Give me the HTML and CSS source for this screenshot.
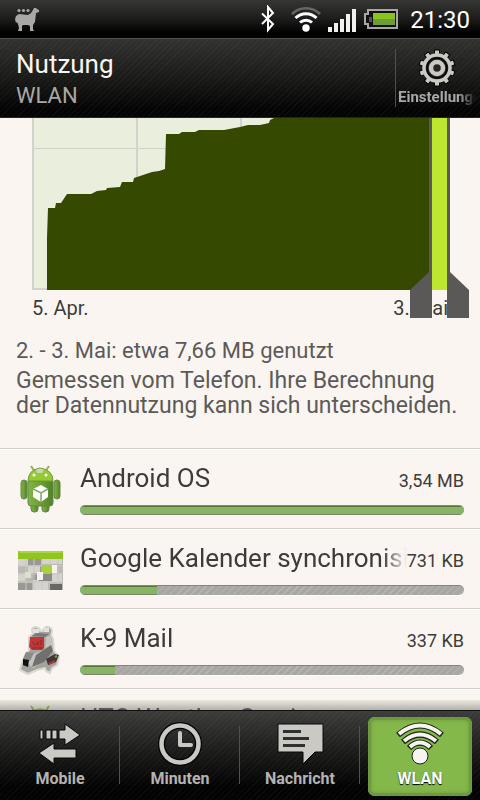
FILE: index.html
```html
<!DOCTYPE html>
<html lang="de">
<head>
<meta charset="utf-8">
<meta name="viewport" content="width=device-width, initial-scale=1">
<title>Nutzung – WLAN</title>
<link rel="stylesheet" href="styles.css">
</head>
<body>
<div class="statusbar">
  <svg class="notification" width="26" height="26" viewBox="0 0 26 26" aria-hidden="true">
    <path fill="#a9a8a6" d="M19 4 20 2h2l1 1 2 1v2l-3 1-1 9-2 3v4l1 2h-4v-5l-2-1H9l-1 1v5H4l1-3-1-4-1-2-1 1-1-4 1-3 3-2 9 1 3-2z"/>
    <g fill="#a9a8a6"><circle cx="5" cy="4.500" r="1.600"/><circle cx="9.500" cy="4.500" r="1.600"/><circle cx="14" cy="4.500" r="1.600"/></g>
  </svg>
  <div class="status-icons">
    <svg class="bluetooth" width="16" height="28" viewBox="0 0 16 28" aria-hidden="true"><path fill="none" stroke="#fff" stroke-width="2" d="M2 8.500 13 19l-5 6V2l5 6L2 19"/></svg>
    <svg width="32" height="28" viewBox="0 0 32 28" fill="none" stroke="#fff" stroke-width="3" aria-hidden="true">
      <path stroke="#686866" stroke-width="2.500" d="M2 9a20 20 0 0 1 28 0"/><path d="M5.500 13a15 15 0 0 1 21 0"/><path d="M10 17.500a9 9 0 0 1 12 0"/><circle cx="16" cy="23" r="3.700" fill="#fff" stroke="none"/>
    </svg>
    <svg width="28" height="26" viewBox="0 -2 28 26" fill="#f2f1ef" aria-hidden="true"><path d="M0 19h4v5H0zM6 15h4v9H6zM12 11h4v13h-4zM18 6h4v18h-4zM24 1h4v23h-4z"/></svg>
    <svg class="battery" width="34" height="20" viewBox="0 0 34 20" aria-hidden="true"><path fill="#111" stroke="#aaa8a6" stroke-width="2" d="M4 1h29v18H4v-4H1V5h3z"/><path fill="#8ac31d" d="M9 4h22v6H9z"/><path fill="#6d9c35" d="M9 10h22v6H9z"/><path fill="#555" d="M5 8h3v5H5z"/></svg>
    <time class="clock">21:30</time>
  </div>
</div>
<header class="titlebar">
  <div class="titles">
    <h1>Nutzung</h1>
    <p>WLAN</p>
  </div>
  <button class="settings" type="button">
    <svg width="38" height="38" viewBox="-19 -19 38 38" aria-hidden="true">
      <g fill="#cbc9c3" stroke="#000" stroke-width="1">
        <path id="tooth" d="M-2.500-18h5v5h-5zM-2.500 13h5v5h-5z"/><use href="#tooth" transform="rotate(36)"/><use href="#tooth" transform="rotate(72)"/><use href="#tooth" transform="rotate(108)"/><use href="#tooth" transform="rotate(144)"/>
      </g>
      <circle r="13" fill="#262625" stroke="#cbc9c3" stroke-width="3.500"/><circle r="10" fill="none" stroke="#080808" stroke-width="1.500"/><circle r="6" fill="#262625" stroke="#cbc9c3" stroke-width="4.500"/>
    </svg>
    <span>Einstellungen</span>
  </button>
</header>
<main>
  <section class="chart">
    <svg class="plot" viewBox="0 0 480 172" preserveAspectRatio="none" role="img" aria-label="Datennutzung">
      <path fill="#eaeedd" d="M32 0h398v172H32z"/>
      <path fill="none" stroke="#d3d3ce" stroke-width="2" d="M33 0v171h397M137 0v171M241 0v171"/>
      <path fill="none" stroke="#d3d3ce" d="M34 30.500h396"/>
      <path fill="#354a00" d="M47 172V120L48 90H55L56 85H61L67 76H91L97 73 106 72 107 70 120 69 122 64H133L134 60 146 56 152 54 159 53 165 51 166 16H179L182 14H195L199 12H224L240 9 248 7H260L269 5 270 2 274 0H430V172z"/>
      <path fill="#bce630" d="M432 0h15v172h-15z"/>
    </svg>
    <div class="axis"><span>5. Apr.</span><span>3. Mai</span></div>
    <svg class="handles" viewBox="0 0 480 200" preserveAspectRatio="none" aria-hidden="true">
      <path fill="#5b5957" d="M429 0h3v200h-22v-28l19-18zM447 0h3v154l19 18v28h-22z"/>
    </svg>
  </section>
  <section class="summary">
    <p>2. - 3. Mai: etwa 7,66 MB genutzt</p>
    <p class="note">Gemessen vom Telefon. Ihre Berechnung der Datennutzung kann sich unterscheiden.</p>
  </section>
  <ul class="apps">
    <li>
      <svg class="app-icon" viewBox="0 0 48 56" aria-hidden="true">
        <defs><linearGradient id="body" x2="1"><stop stop-color="#82b34b"/><stop offset=".5" stop-color="#6ca12f"/><stop offset="1" stop-color="#4f812c"/></linearGradient></defs>
        <path stroke="#8bb653" stroke-width="2" d="m15 5 4 6M33 5l-4 6"/>
        <g fill="url(#body)" stroke="#66834b"><rect x="5" y="19" width="6" height="19" rx="3"/><rect x="38" y="19" width="6" height="19" rx="3"/><rect x="15" y="38" width="7" height="13" rx="3"/><rect x="26" y="38" width="7" height="13" rx="3"/><path d="M12 20h25v22q0 3-3 3H15q-3 0-3-3z"/></g>
        <path fill="#95ca33" stroke="#6f9d35" d="M12 20q0-11 12-13 13 2 13 13z"/><path fill="#cfd3bd" d="M20 9q4-3 8 0l-2 3h-5z"/><circle cx="18" cy="14" r="1.500" fill="#fff"/><circle cx="30" cy="14" r="1.500" fill="#fff"/>
        <path fill="#fff" d="m25 24 7 4v8l-7 5-8-5v-8z"/><path fill="none" stroke="#83a765" stroke-width="1.500" d="m17 28 8 4 7-4M25 32v9"/>
      </svg>
      <span class="app-name">Android OS</span><span class="amount">3,54 MB</span>
      <div class="bar"><div class="fill" style="width:100%"></div></div>
    </li>
    <li>
      <svg class="app-icon" viewBox="0 0 48 56" aria-hidden="true">
        <path fill="#bbb9b5" d="M2 10h45v39H2z"/><path fill="#90c51d" d="M2 10h45v8H2z"/><path fill="#aad547" d="M3 10h43v2H3z"/>
        <path fill="#d5d3ce" d="M2 18h10v7H2zM12 25h12v7H12zM2 32h7v8H2zM26 18h20v5H26zM33 32h13v9H33zM17 39h15v10H17z"/><path fill="#999895" d="M12 18h13v6H12zM24 25h8v6h-8zM17 32h6v7h-6zM2 42h14v7H2z"/>
        <path fill="none" stroke="#c9c7c2" d="M2 25h45M2 33h45M2 41h45M10 18v31M18 18v31M26 18v31M34 18v31M42 18v31"/>
        <path fill="#8a8985" d="M23 32h13v8H23z"/><path fill="#a8d13c" d="M26 24h9v9h-9z"/><path fill="#f3f2ed" d="M36 24h5v8h-5zM21 31h6v8h-6z"/><path fill="#dce2ca" d="M9 31h6v6H9z"/><path fill="#686765" d="M34 43h12v6H34z"/>
      </svg>
      <span class="app-name">Google Kalender synchronisieren</span><span class="amount">731 KB</span>
      <div class="bar"><div class="fill" style="width:20%"></div></div>
    </li>
    <li>
      <svg class="app-icon" viewBox="0 0 48 56" aria-hidden="true">
        <path fill="#a5a3a0" stroke="#d9d8cf" stroke-width="2" stroke-linejoin="round" d="m13 16 4-3q-3-6 2-7 5 0 5 4h3q1-5 6-4 5 2 2 8l2 4 1 12 5 6-2 8-5 3-2 5-4-2-1-3-8 2-9 4-8-4 2-8 4-8 3-4z"/>
        <path fill="#e3e1dd" d="M17 8h6v4h-6zM28 7h5v4h-5z"/><path fill="#7b7977" d="M15 15l6-3 12 1-4 3z"/><path fill="#c6c4bf" d="m30 16 5-2 2 16-8 8-12 9-6-5 3-8 15-5z"/>
        <path fill="#72706e" d="m20 34 15-10 2 6-9 11-12 5 2-6z"/><path fill="#8c8a88" d="m10 31 8 1-4 8-7-2z"/><path fill="#c23436" d="M14 16h14v11l-2 2H16l-3-3z"/><path stroke="#7e2c2c" fill="none" d="M16 21l3 3 3-3v4M25 19v5M16 27h10"/><path fill="#111" d="M7 38l6 1-1 7-5-2z"/><path fill="#3d3936" d="m30 38 9-5 4 1-3 7-8 3z"/><path stroke="#c03131" stroke-width="2" d="m33 43 6-3"/><path stroke="#72a747" stroke-width="2" d="m39 36 2-1"/>
      </svg>
      <span class="app-name">K-9 Mail</span><span class="amount">337 KB</span>
      <div class="bar"><div class="fill" style="width:9%"></div></div>
    </li>
    <li>
      <svg class="app-icon" viewBox="0 0 48 56" aria-hidden="true"><path stroke="#82b440" stroke-width="2" d="m15 5 4 6M33 5l-4 6"/><path fill="#95ca33" d="M12 20q0-11 12-13 13 2 13 13z"/></svg>
      <span class="app-name">HTC Weather Service</span>
      <div class="bar"></div>
    </li>
  </ul>
</main>
<nav class="tabs">
  <a href="#mobile">
    <svg width="44" height="44" viewBox="0 0 44 44" fill="#cbc9c3" stroke="#080808" aria-hidden="true"><path d="M2 8h3v9H2zM8 8h5v9H8zM14 8h5v9h-5zM21 8h6V2l15 11-15 10v-6h-6zM38 27H16v-6L1 31l15 11v-6h22z"/></svg>
    <span>Mobile</span>
  </a>
  <a href="#minuten">
    <svg width="44" height="44" viewBox="0 0 44 44" fill="none" aria-hidden="true"><circle cx="22" cy="22" r="18.500" stroke="#060606" stroke-width="7"/><circle cx="22" cy="22" r="18.500" stroke="#cbc9c3" stroke-width="4.500"/><path stroke="#cbc9c3" stroke-width="4" stroke-linejoin="round" stroke-linecap="round" d="M22 11v12h11"/></svg>
    <span>Minuten</span>
  </a>
  <a href="#nachricht">
    <svg width="48" height="44" viewBox="0 0 48 44" aria-hidden="true"><path fill="#cbc9c3" stroke="#080808" d="M2 2h45v28h-8L27 42V30H2z"/><path stroke="#30302e" stroke-width="3" d="M7 9.500h18M7 16.500h26M7 23.500h22"/></svg>
    <span>Nachricht</span>
  </a>
  <a class="active" href="#wlan" aria-current="page">
    <svg width="48" height="44" viewBox="0 0 48 44" fill="none" aria-hidden="true">
      <g stroke="#1b2415" stroke-width="6"><path d="M2 13q22-19 44 0M7 20q17-15 34 0M13 26q11-11 22 0"/></g>
      <g stroke="#f7f3f0" stroke-width="4"><path d="M3 12q21-17 42 0M8 19q16-13 32 0M14 25q10-9 20 0"/></g><circle cx="24" cy="34" r="8" fill="#f7f3f0" stroke="#1b2415"/>
    </svg>
    <span>WLAN</span>
  </a>
</nav>
</body>
</html>
```
FILE: styles.css
```css
* { box-sizing: border-box; }
html, body { height: 100%; }
body {
  margin: 0;
  display: flex;
  flex-direction: column;
  overflow: hidden;
  background: #fbf5f1;
  color: #3d3c3b;
  font-family: Roboto, "Liberation Sans", sans-serif;
}
h1, p, ul { margin: 0; padding: 0; }
svg { display: block; }

.statusbar {
  flex: none;
  height: 38px;
  padding: 0 10px 0 14px;
  display: flex;
  align-items: center;
  justify-content: space-between;
  background: linear-gradient(#363635, #1c1c1b 50%, #020202 85%);
}
.status-icons { display: flex; align-items: center; gap: 6px; }
.bluetooth { margin-right: 8px; }
.battery { margin: 0 6px 0 2px; }
.clock { padding-top: 2px; color: #fff; font-size: 24px; line-height: 28px; }

.titlebar {
  flex: none;
  height: 80px;
  padding: 0 4px 0 16px;
  display: flex;
  align-items: center;
  justify-content: space-between;
  border-top: 1px solid #50504e;
  border-bottom: 1px solid #242424;
  background:
    repeating-linear-gradient(135deg, transparent 0 3px, rgba(255, 255, 255, .03) 3px 4px),
    linear-gradient(#323231, #1a1a19 50%, #040404 90%);
}
.titles { padding-top: 4px; }
.titles h1 { color: #fbf5f1; font-size: 26px; line-height: 32px; font-weight: 400; }
.titles p { color: #aaa8a6; font-size: 22px; line-height: 32px; }
.settings {
  width: 81px;
  padding: 0 0 0 2px;
  border: 0;
  border-left: 1px solid #50504e;
  background: none;
  color: #aaa8a6;
  font: 700 15px/20px Roboto, "Liberation Sans", sans-serif;
  text-align: left;
  overflow: hidden;
}
.settings svg { margin: 0 auto; }
.settings span {
  display: block;
  overflow: hidden;
  white-space: nowrap;
  mask-image: linear-gradient(to right, #000 78%, transparent);
}

main { flex: 1; min-height: 0; overflow: hidden; position: relative; }
main::after {
  content: "";
  position: absolute;
  inset: auto 0 0;
  height: 10px;
  background: linear-gradient(rgba(200, 205, 175, .3), rgba(110, 110, 108, .5));
}
.chart { position: relative; }
.plot { width: 100%; height: 172px; }
.axis {
  display: flex;
  justify-content: space-between;
  height: 40px;
  padding: 0 32px;
  font-size: 20px;
  line-height: 36px;
}
.handles { position: absolute; top: 0; left: 0; width: 100%; height: 200px; }
.summary { padding: 8px 16px 30px; color: #5b5a59; font-size: 22px; line-height: 25px; }
.summary .note { margin-top: 5px; font-size: 23px; }

.apps { list-style: none; }
.apps li {
  height: 80px;
  padding: 12px 16px 0;
  display: grid;
  grid-template: 36px 10px / 64px minmax(0, 1fr) auto;
  row-gap: 8px;
  border-top: 1px solid #d0cecb;
  box-shadow: inset 0 1px #fff;
}
.app-icon { grid-row: 1 / 3; width: 48px; height: 56px; }
.app-name {
  overflow: hidden;
  white-space: nowrap;
  font-size: 26px;
  line-height: 34px;
  mask-image: linear-gradient(to right, #000 calc(100% - 24px), transparent);
}
.amount { font-size: 18px; line-height: 40px; }
.bar {
  grid-column: 2 / 4;
  height: 10px;
  border-radius: 5px;
  overflow: hidden;
  border-top: 1px solid #858482;
  background: repeating-linear-gradient(135deg, #a9a7a4 0 4px, #b8b6b2 4px 5px);
  box-shadow: 0 1px #fff;
}
.fill { height: 100%; background: #8ab365; border-top: 1px solid #547b36; border-bottom: 1px solid #76886c; }

.tabs {
  flex: none;
  height: 90px;
  display: grid;
  grid-template-columns: repeat(4, 1fr);
  padding: 6px 0 4px;
  border-top: 1px solid #111;
  background:
    repeating-linear-gradient(135deg, transparent 0 3px, rgba(255, 255, 255, .03) 3px 4px),
    linear-gradient(#3c3c3b, #1c1c1b 45%, #030303 85%);
}
.tabs a {
  display: flex;
  flex-direction: column;
  align-items: center;
  padding-top: 5px;
  gap: 3px;
  color: #b5b3b1;
  font-size: 16px;
  line-height: 20px;
  font-weight: 700;
  text-decoration: none;
}
.tabs a:not(.active) {
  background: linear-gradient(#50504e, #50504e) right 9px / 1px 58px no-repeat;
}
.tabs .active {
  margin: 0 8px;
  color: #fff;
  border-radius: 7px;
  background: #85b84b;
  box-shadow: inset 0 0 0 3px #6d9941, inset 0 0 4px 3px #6d9941;
  text-shadow: 0 1px 1px #000;
}
```
